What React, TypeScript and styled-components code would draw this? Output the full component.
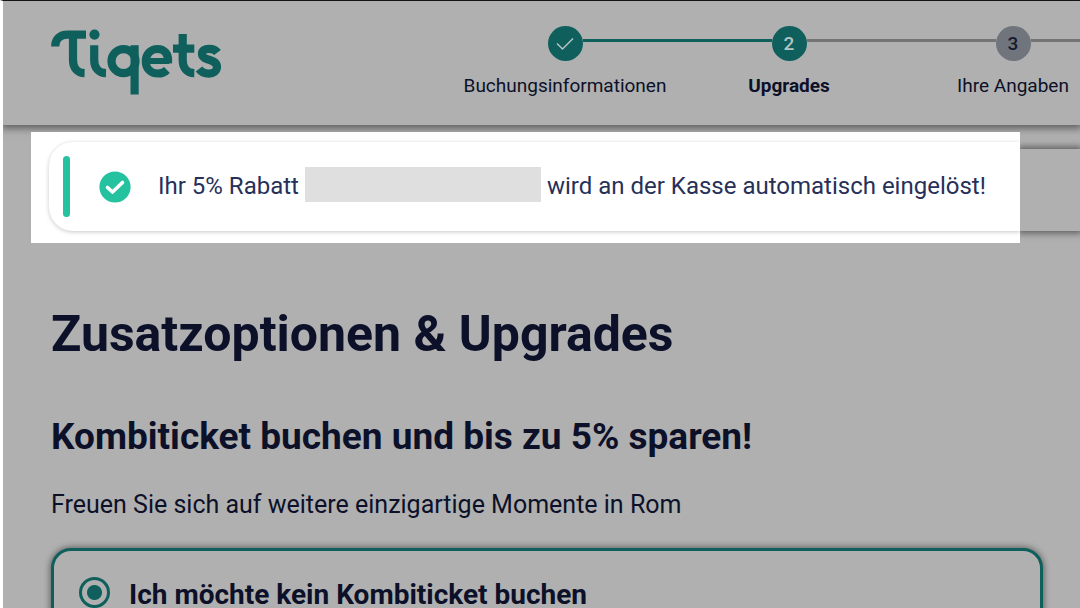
import React from 'react';
import styled, { createGlobalStyle } from 'styled-components';

const GlobalStyle = createGlobalStyle`
  *, *::before, *::after { box-sizing: border-box; }
  html { scrollbar-width: none; }
  body { margin: 0; background: #fff; font-family: Roboto, "Liberation Sans", sans-serif; }
  h1, h2, p, ol { margin: 0; padding: 0; }
`;

const ink = '#0c1028';
const teal = '#0f605d';
const grey = '#b0b0b0';

const Frame = styled.div`
  display: flex;
  flex-direction: column;
  min-height: 100vh;
  overflow-x: clip;
  border-top: 1px solid #1c1a20;
  border-left: 3px solid #fff;
  background: ${grey};
  color: ${ink};
`;

const Header = styled.header`
  display: flex;
  justify-content: space-between;
  flex: none;
  height: 124px;
  padding-left: 48px;
  background: ${grey};
  box-shadow: 0 1px 8px 2px rgba(0, 0, 0, 0.5);
`;

const LogoLink = styled.a`
  flex: none;
  height: 68px;
  margin-top: 27px;
  color: ${teal};
`;

const Steps = styled.ol`
  display: flex;
  flex: 0 1 672px;
  margin-right: -45px;
  padding-top: 25px;
  list-style: none;
`;

const Step = styled.li`
  flex: 1;
  display: flex;
  flex-direction: column;
  gap: 13px;
`;

const Track = styled.div`
  display: flex;
  align-items: flex-start;
`;

const Connector = styled.span<{ $tone: string }>`
  flex: 1;
  height: 3px;
  margin-top: 13px;
  background: ${(p) => p.$tone};
`;

const Badge = styled.span<{ $upcoming?: boolean }>`
  display: flex;
  align-items: center;
  justify-content: center;
  width: 35px;
  height: 35px;
  border-radius: 50%;
  background: ${(p) => (p.$upcoming ? '#70747c' : teal)};
  color: ${(p) => (p.$upcoming ? '#151a2c' : '#b4c4c3')};
  font-size: 19px;
  font-weight: 500;
`;

const StepLabel = styled.span<{ $current?: boolean }>`
  font-size: 19px;
  line-height: 24px;
  font-weight: ${(p) => (p.$current ? 700 : 400)};
  text-align: center;
  white-space: nowrap;
`;

const NoticeBand = styled.section`
  position: relative;
  display: flex;
  flex: none;
  height: 111px;
  margin-top: 7px;
  padding-left: 28px;
`;

const Spotlight = styled.div`
  flex: 1;
  overflow: hidden;
  padding: 10px 0 12px 18px;
  background: #fff;
`;

const Notice = styled.div`
  display: flex;
  align-items: center;
  height: 89px;
  padding-left: 14px;
  border-radius: 24px 0 0 24px;
  background: #fff;
  box-shadow: 0 1px 4px 0 rgba(0, 0, 0, 0.22);
`;

const Accent = styled.span`
  flex: none;
  width: 7px;
  height: 61px;
  border-radius: 4px;
  background: #25c2a0;
`;

const NoticeIcon = styled.svg`
  flex: none;
  margin: 0 27px 0 29px;
`;

const NoticeText = styled.p`
  display: flex;
  align-items: center;
  gap: 6px;
  color: #273058;
  font-size: 24px;
  line-height: 37px;
  white-space: nowrap;
`;

const Redacted = styled.span`
  width: 236px;
  height: 35px;
  margin-bottom: 4px;
  background: #dfdfdf;
`;

const Shade = styled.div`
  flex: 0 0 60px;
  overflow: hidden;
  padding: 17px 0 12px;
`;

const ShadeCard = styled.div`
  height: 82px;
  background: ${grey};
  box-shadow: 0 0 7px 2px rgba(0, 0, 0, 0.5);
`;

const Main = styled.main`
  padding: 61px 37px 32px 48px;
`;

const Title = styled.h1`
  font-size: 50px;
  line-height: 60px;
  font-weight: 700;
`;

const Subtitle = styled.h2`
  margin-top: 49px;
  font-size: 37px;
  line-height: 48px;
  font-weight: 700;
`;

const Lead = styled.p`
  margin-top: 28px;
  font-size: 25px;
  line-height: 32px;
`;

const Option = styled.label`
  display: flex;
  align-items: flex-start;
  gap: 19px;
  margin-top: 27px;
  padding: 26px 25px;
  border: 3px solid ${teal};
  border-radius: 20px;
  background: ${grey};
  box-shadow: 0 0 6px 1px rgba(0, 0, 0, 0.45);
  font-size: 28px;
  line-height: 36px;
  font-weight: 700;
`;

const Radio = styled.input`
  appearance: none;
  flex: none;
  width: 31px;
  height: 31px;
  margin: 0;
  border: 3px solid ${teal};
  border-radius: 50%;
  background: radial-gradient(circle, ${teal} 0 7px, transparent 8px);
`;

const Logo = () => (
  <svg width="170" height="68" viewBox="51 28 170 68" fill="none" stroke="currentColor" strokeWidth="8.2" role="img" aria-label="Tiqets">
    <path d="M55.2 46.5C55.2 39 60 34.6 67.5 34.6H86" />
    <path d="M73 34.6V60C73 68 77.5 73 84.6 73.2" />
    <path d="M94.2 45.2V60C94.2 68 98.7 73 106 73.2" />
    <circle cx="94.5" cy="34.6" r="5.1" fill="currentColor" stroke="none" />
    <circle cx="123.5" cy="61.2" r="12" />
    <path d="M134.6 45.2V94.5" />
    <path d="M145 61H169.5" strokeWidth="6" />
    <path d="M168 63C169 54 164.5 49 157.5 49C150.5 49 145.8 54.2 145.8 61.2C145.8 68.5 150.8 73.5 158 73.5C161.5 73.5 164.5 72.5 167 70" />
    <path d="M182.7 34V60C182.7 68 187 73 194.3 73.2M173 48.7H194.3" />
    <path d="M217.5 52.5C215.5 49.7 212.5 48.8 209 48.8C204.5 48.8 202 50.8 202 53.8C202 61.5 217 58 217 67C217 71.2 213.5 73.6 208.8 73.6C204.8 73.6 201.5 72.3 199 69" />
  </svg>
);

export default function App() {
  return (
    <Frame>
      <GlobalStyle />
      <Header>
        <LogoLink href="#"><Logo /></LogoLink>
        <Steps>
          <Step>
            <Track>
              <Connector $tone="transparent" />
              <Badge>
                <svg width="18" height="14" viewBox="0 0 18 14" fill="none" stroke="currentColor" strokeWidth="1.5" aria-label="Erledigt">
                  <path d="M1 6.5L6.5 12L17 1.5" />
                </svg>
              </Badge>
              <Connector $tone={teal} />
            </Track>
            <StepLabel>Buchungsinformationen</StepLabel>
          </Step>
          <Step aria-current="step">
            <Track>
              <Connector $tone={teal} />
              <Badge>2</Badge>
              <Connector $tone="#747474" />
            </Track>
            <StepLabel $current>Upgrades</StepLabel>
          </Step>
          <Step>
            <Track>
              <Connector $tone="#747474" />
              <Badge $upcoming>3</Badge>
              <Connector $tone="#747474" />
            </Track>
            <StepLabel>Ihre Angaben</StepLabel>
          </Step>
        </Steps>
      </Header>
      <NoticeBand role="status">
        <Spotlight>
          <Notice>
            <Accent />
            <NoticeIcon width="32" height="32" viewBox="0 0 32 32" fill="none">
              <circle cx="16" cy="16" r="15.6" fill="#25c2a0" />
              <path d="M8.5 16.5L13.5 21L23.5 11.5" stroke="#fff" strokeWidth="3.6" strokeLinecap="round" strokeLinejoin="round" />
            </NoticeIcon>
            <NoticeText>
              <span>Ihr 5% Rabatt</span>
              <Redacted />
              <span>wird an der Kasse automatisch eingelöst!</span>
            </NoticeText>
          </Notice>
        </Spotlight>
        <Shade><ShadeCard /></Shade>
      </NoticeBand>
      <Main>
        <Title>Zusatzoptionen &amp; Upgrades</Title>
        <Subtitle>Kombiticket buchen und bis zu 5% sparen!</Subtitle>
        <Lead>Freuen Sie sich auf weitere einzigartige Momente in Rom</Lead>
        <Option>
          <Radio type="radio" name="combi" defaultChecked />
          <span>Ich möchte kein Kombiticket buchen</span>
        </Option>
      </Main>
    </Frame>
  );
}
